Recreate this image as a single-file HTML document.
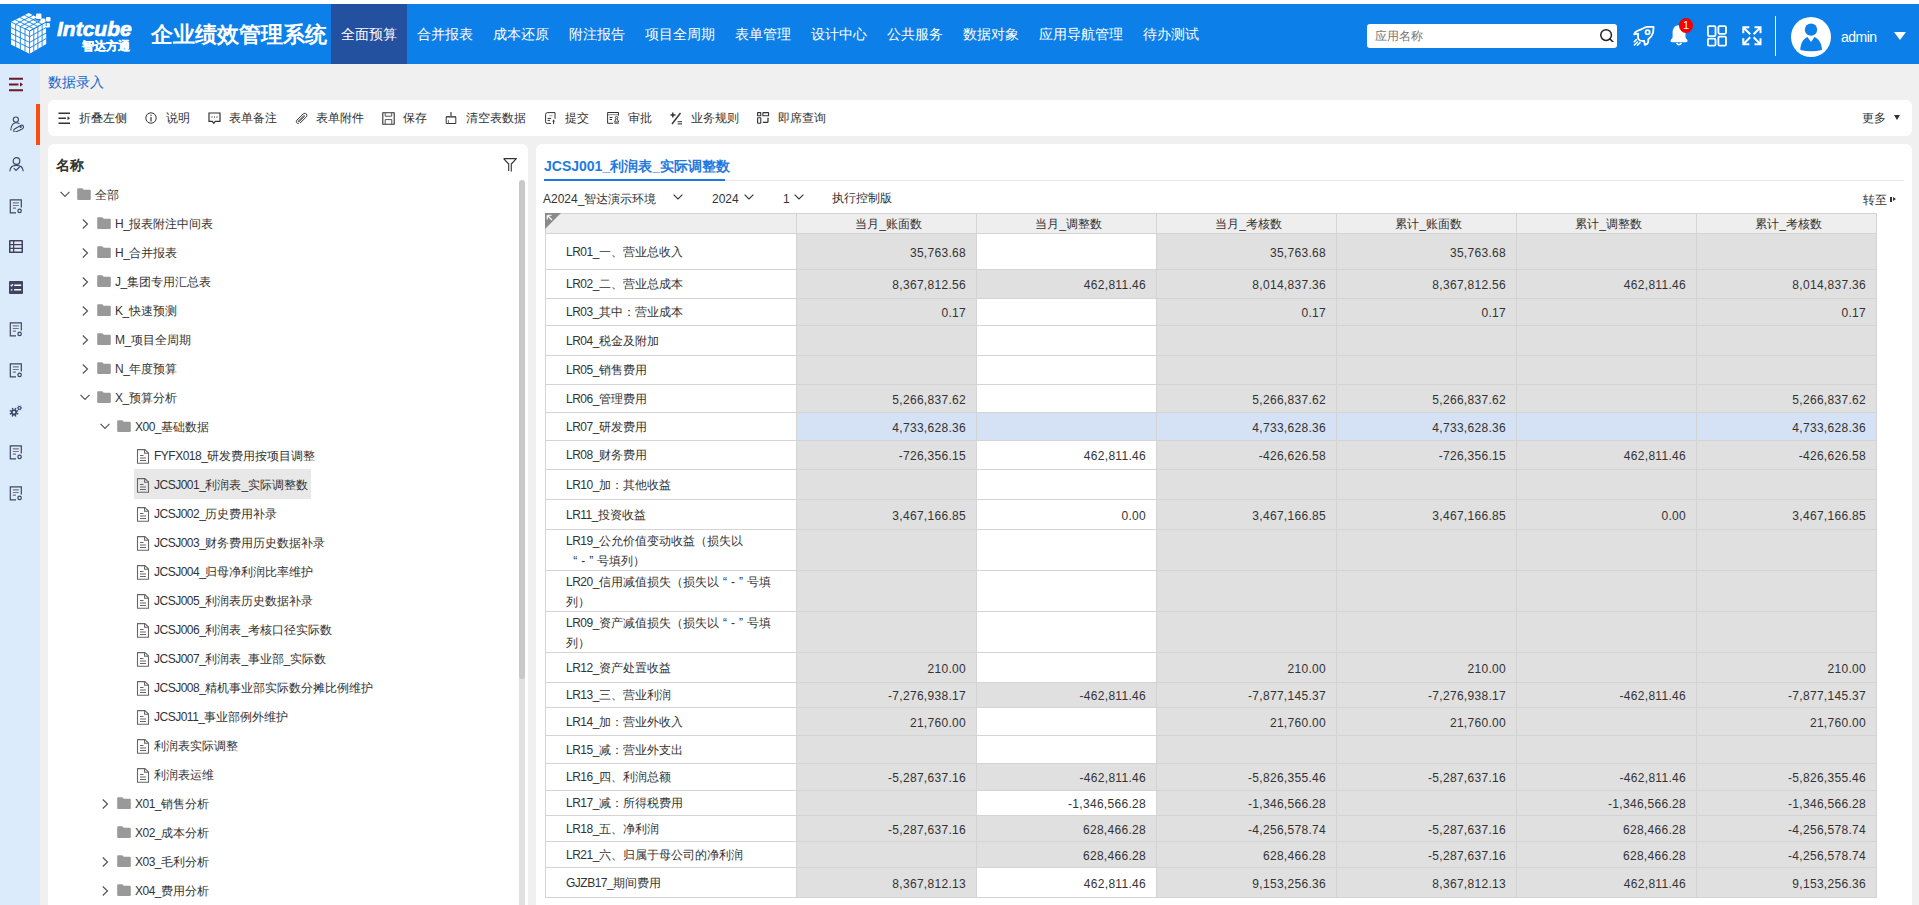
<!DOCTYPE html>
<html><head><meta charset="utf-8">
<style>
*{margin:0;padding:0;box-sizing:border-box}
html,body{width:1919px;height:905px;overflow:hidden;background:#f0f0f0;font-family:"Liberation Sans",sans-serif;color:#333}
.abs{position:absolute}
#top{position:absolute;left:0;top:0;width:1919px;height:4px;background:#fff}
#hdr{position:absolute;left:0;top:4px;width:1919px;height:60px;background:#0c7fe8;color:#fff}
.nav{position:absolute;top:0;height:60px;line-height:60px;font-size:14px;padding:0 10px;color:#fff;white-space:nowrap}
.nav.act{background:#23509f}
#side{position:absolute;left:0;top:64px;width:40px;height:841px;background:#dcebfb}
.sic{position:absolute;left:9px}
#crumb{position:absolute;left:48px;top:72px;font-size:14px;line-height:20px;color:#1466cc}
#tb{position:absolute;left:48px;top:100px;width:1864px;height:36px;background:#fff;border-radius:6px}
.tbi{position:absolute;top:9px;font-size:12px;line-height:18px;color:#333;white-space:nowrap}
.tbic{position:absolute;top:12px}
#lp{position:absolute;left:48px;top:144px;width:480px;height:780px;background:#fff;border-radius:6px}
#rp{position:absolute;left:536px;top:144px;width:1376px;height:780px;background:#fff;border-radius:6px}
.tt{position:absolute;font-size:12px;line-height:20px;color:#333;white-space:nowrap}
.ic{position:absolute;line-height:0}
.sel{position:absolute;background:#e8e8e8}
.th{position:absolute;background:#eeeeee;border-left:1px solid #d4d4d4;border-top:1px solid #d4d4d4;font-size:12px;line-height:19px;padding-top:1px;padding-left:4px;text-align:center;color:#333}
.td{position:absolute;border-left:1px solid #d4d4d4;border-top:1px solid #d4d4d4;font-size:12px;color:#333;white-space:nowrap;overflow:hidden}
.lab{padding-left:20px;background:#fff}
.lab2{padding-left:20px;background:#fff;padding-top:1px}
.num{text-align:right;padding-right:10px;letter-spacing:0.3px}
.g{background:#e0e0e0}
.w{background:#fff}
.b{background:#d5e1f5}
.lt{letter-spacing:-0.5px}
.q{display:inline-block;width:12px;text-align:center}
.corner{position:absolute;left:0;top:0;width:0;height:0;border-top:16px solid #777;border-right:16px solid transparent}
</style></head><body>
<div id="top"></div>
<div id="hdr">
  <svg class="abs" style="left:0;top:0" width="60" height="60" viewBox="0 4 60 60">
    <path d="M11 22 L28.8 13 L46.2 22 L46.2 44 L29.6 53.7 L11 44.6 Z" fill="#fff"/>
    <path d="M11.0 27.6 L29.6 36.7 M15.7 24.2 L15.7 46.9 M33.8 28.8 L33.8 51.3 M29.6 36.7 L46.2 27.5 M15.4 19.8 L33.8 28.8 M15.7 24.2 L33.1 15.2 M11.0 33.3 L29.6 42.4 M20.3 26.5 L20.3 49.2 M37.9 26.5 L37.9 48.9 M29.6 42.4 L46.2 33.0 M19.9 17.5 L37.9 26.5 M20.3 26.5 L37.5 17.5 M11.0 39.0 L29.6 48.0 M25.0 28.8 L25.0 51.4 M42.1 24.2 L42.1 46.4 M29.6 48.0 L46.2 38.5 M24.4 15.2 L42.1 24.2 M25.0 28.8 L41.9 19.8 M29.6 31 L29.6 53.7 M11 22 L29.6 31 L46.2 22" stroke="#0c7fe8" stroke-width="0.9" fill="none"/>
    <path d="M34 20 L46.5 13.5 L50 15.5 L50 30 L46.2 34.4 L46.2 22 Z" fill="#0c7fe8"/>
    <rect x="36" y="13.5" width="5.5" height="5.5" rx="1.2" fill="#fff"/>
    <rect x="40.5" y="18.5" width="5" height="5" rx="1.2" fill="#fff"/>
    <rect x="46" y="17" width="4.5" height="4.5" rx="1.2" fill="#fff"/>
    <rect x="45.5" y="23" width="4.5" height="4.5" rx="1.2" fill="#fff"/>
    <path d="M29.6 31 L46.2 22 L46.2 26" stroke="#0c7fe8" stroke-width="0.9" fill="none"/>
  </svg>
  <div class="abs" style="left:57px;top:13px;font-size:21px;line-height:24px;font-weight:bold;font-style:italic;-webkit-text-stroke:0.7px #fff">Intcube</div>
  <div class="abs" style="left:81.5px;top:35px;font-size:12px;line-height:14px;font-weight:bold;letter-spacing:0.3px;-webkit-text-stroke:0.3px #fff">智达方通</div>
  <div class="abs" style="left:151px;top:18px;font-size:22px;line-height:26px;font-weight:bold">企业绩效管理系统</div>
  <div class="nav act" style="left:331px">全面预算</div>
  <div class="nav" style="left:407px">合并报表</div>
  <div class="nav" style="left:483px">成本还原</div>
  <div class="nav" style="left:559px">附注报告</div>
  <div class="nav" style="left:635px">项目全周期</div>
  <div class="nav" style="left:725px">表单管理</div>
  <div class="nav" style="left:801px">设计中心</div>
  <div class="nav" style="left:877px">公共服务</div>
  <div class="nav" style="left:953px">数据对象</div>
  <div class="nav" style="left:1029px">应用导航管理</div>
  <div class="nav" style="left:1133px">待办测试</div>
  <div class="abs" style="left:1367px;top:20px;width:250px;height:24px;background:#fff;border-radius:3px"></div>
  <div class="abs" style="left:1375px;top:24px;font-size:12px;line-height:16px;color:#777">应用名称</div>
  
  <svg class="abs" style="left:1598px;top:20px" width="18" height="18" viewBox="0 0 18 18"><circle cx="8.1" cy="11.1" r="5.35" fill="none" stroke="#222" stroke-width="1.5"/><path d="M12 15 L15.2 18.2" stroke="#222" stroke-width="1.6" stroke-linecap="round"/></svg>
  <svg class="abs" style="left:1632px;top:20px" width="24" height="24" viewBox="0 0 24 24" fill="none" stroke="#fff" stroke-width="1.8" stroke-linejoin="round" stroke-linecap="round">
    <path d="M21.6 2.8 L15.3 2.8 C13 3 11.4 3.9 9.8 5.1 L5.4 6.9 C3.6 7.6 2.4 9 2.2 10.4 L6.2 9.6 L6 13.8 C6.3 15.3 7 16.2 8.2 16.6 L12.2 17 L12.8 20.8 C14.3 20.7 15.6 19.8 16.2 18.4 L16.3 15.3 C18.8 13.3 20.4 11.2 21.1 8.8 Z"/>
    <circle cx="15.6" cy="8.2" r="2.1"/>
    <path d="M2.4 21 L5.4 18 M5.4 21.2 L8 18.6 M2.2 17.8 L4.4 15.6" stroke-width="1.6"/>
  </svg>
  <svg class="abs" style="left:1668px;top:18px" width="22" height="25" viewBox="0 0 22 25"><path d="M11 3.2 C6.5 3.2 4.6 6.8 4.6 10.8 L4.6 15.6 L2.6 18.2 Q2.1 20.2 4.1 20.2 L18 20.2 Q20 20.2 19.5 18.2 L17.5 15.6 L17.5 10.8 C17.5 6.8 15.5 3.2 11 3.2 Z" fill="#fff"/><path d="M8.6 21 Q11 24.6 13.4 21" fill="none" stroke="#fff" stroke-width="1.5"/></svg>
  <div class="abs" style="left:1679px;top:14px;width:14px;height:15px;border-radius:50%;background:#f50000;color:#fff;font-family:'Liberation Sans',sans-serif;font-size:11px;line-height:15px;text-align:center">1</div>
  <svg class="abs" style="left:1706px;top:21px" width="22" height="22" viewBox="0 0 22 22" fill="none" stroke="#fff" stroke-width="1.8">
    <rect x="1.9" y="1.1" width="7.6" height="10.1" rx="1.2"/><rect x="12.4" y="1.1" width="7.6" height="7.7" rx="1.2"/>
    <rect x="1.9" y="13.7" width="7.6" height="7" rx="1.2"/><rect x="12.4" y="11.6" width="7.6" height="9.1" rx="1.2"/>
  </svg>
  <svg class="abs" style="left:1742px;top:22px" width="20" height="20" viewBox="0 0 20 20" fill="none" stroke="#fff" stroke-width="2">
    <path d="M1.3 7.3 V1.3 H7.3 M12.5 1.3 H18.5 V7.3 M1.3 12.2 V18.2 H7.3 M12.5 18.2 H18.5 V12.2" stroke-linejoin="miter"/>
    <path d="M2 2 L8.2 8.2 M17.8 2 L11.6 8.2 M2 17.5 L8.2 11.3 M17.8 17.5 L11.6 11.3"/>
  </svg>
  <svg class="abs" style="left:1791px;top:13px" width="40" height="40" viewBox="0 0 40 40"><circle cx="20" cy="20" r="20" fill="#fff"/><circle cx="20" cy="12.6" r="6.2" fill="#0c7fe8"/><path d="M9.3 33 C9.5 26 12.5 21.5 16.5 20 L20 25 L23.5 20 C27.5 21.5 30.8 26 31 33 Q20 35.5 9.3 33 Z" fill="#0c7fe8"/></svg>
  <div class="abs" style="left:1775px;top:12px;width:1px;height:40px;background:#fff"></div>
    <div class="abs" style="left:1841px;top:24px;font-size:14px;line-height:18px;color:#fff;letter-spacing:-0.5px">admin</div>
  <div class="abs" style="left:1894px;top:28px;width:0;height:0;border-left:6.5px solid transparent;border-right:6.5px solid transparent;border-top:8.4px solid #fff"></div>
</div>
<div id="side">
  <div class="abs" style="left:36px;top:40px;width:4px;height:41px;background:#fc4c0c"></div>
  <svg class="abs" style="left:8px;top:13px" width="16" height="15" viewBox="0 0 16 15"><path d="M1 1.7 H15 M1 7.5 H10.5 M1 13.3 H15" stroke="#6a1b2b" stroke-width="1.9"/><path d="M12 5.2 L15 7.5 L12 9.8 Z" fill="#6a1b2b"/></svg>
  <svg class="abs" style="left:9px;top:52px" width="15" height="16" viewBox="0 0 15 16" fill="none" stroke="#3d4466" stroke-width="1.1"><circle cx="6.9" cy="3.6" r="2.6"/><path d="M1.8 14.6 C1.8 10 4 6.8 6.9 6.8 C8.4 6.8 9.6 7.2 10.6 7.9"/><path d="M5.2 13.2 L11.6 9.6 Q13.4 8.6 14.2 10 L14.4 10.6 Q14.9 12 13.2 12.9 L6.8 16 Q5 16.4 4.8 14.8 Q4.7 13.6 5.2 13.2 Z" stroke-width="1.1"/><rect x="10.8" y="10.1" width="1.8" height="1.8" fill="#3d4466" stroke="none"/></svg>
  <svg class="abs" style="left:9px;top:93px" width="15" height="15" viewBox="0 0 15 15" fill="none" stroke="#3d4466" stroke-width="1.2"><circle cx="7.5" cy="4" r="3.3"/><path d="M0.8 14.2 C1 10.5 3.8 8.3 7.5 8.3 C11.2 8.3 14 10.5 14.2 14.2"/><path d="M4.8 11.2 L7 13.4 L10.8 9.8"/></svg>
  <div class="abs" style="left:9px;top:135px;line-height:0"><svg width="14" height="15" viewBox="0 0 14 15" fill="none" stroke="#3d4466" stroke-width="1.2"><path d="M7 13.9 H1.3 V0.9 H12.3 V8.5"/><path d="M3.8 3.8 H9.8 M3.8 6.5 H9.8 M3.8 9.2 H7" stroke="#777"/><circle cx="10.6" cy="11.9" r="1.7"/></svg></div>
  <div class="abs" style="left:9px;top:258px;line-height:0"><svg width="14" height="15" viewBox="0 0 14 15" fill="none" stroke="#3d4466" stroke-width="1.2"><path d="M7 13.9 H1.3 V0.9 H12.3 V8.5"/><path d="M3.8 3.8 H9.8 M3.8 6.5 H9.8 M3.8 9.2 H7" stroke="#777"/><circle cx="10.6" cy="11.9" r="1.7"/></svg></div>
  <div class="abs" style="left:9px;top:299px;line-height:0"><svg width="14" height="15" viewBox="0 0 14 15" fill="none" stroke="#3d4466" stroke-width="1.2"><path d="M7 13.9 H1.3 V0.9 H12.3 V8.5"/><path d="M3.8 3.8 H9.8 M3.8 6.5 H9.8 M3.8 9.2 H7" stroke="#777"/><circle cx="10.6" cy="11.9" r="1.7"/></svg></div>
  <div class="abs" style="left:9px;top:381px;line-height:0"><svg width="14" height="15" viewBox="0 0 14 15" fill="none" stroke="#3d4466" stroke-width="1.2"><path d="M7 13.9 H1.3 V0.9 H12.3 V8.5"/><path d="M3.8 3.8 H9.8 M3.8 6.5 H9.8 M3.8 9.2 H7" stroke="#777"/><circle cx="10.6" cy="11.9" r="1.7"/></svg></div>
  <div class="abs" style="left:9px;top:422px;line-height:0"><svg width="14" height="15" viewBox="0 0 14 15" fill="none" stroke="#3d4466" stroke-width="1.2"><path d="M7 13.9 H1.3 V0.9 H12.3 V8.5"/><path d="M3.8 3.8 H9.8 M3.8 6.5 H9.8 M3.8 9.2 H7" stroke="#777"/><circle cx="10.6" cy="11.9" r="1.7"/></svg></div>
  <svg class="abs" style="left:9px;top:176px" width="14" height="13" viewBox="0 0 14 13"><rect x="0" y="0" width="14" height="13" rx="0.8" fill="#3d4466"/><path d="M1.5 1.5 H4 V4 H1.5 Z M5.3 1.5 H12.5 V4 H5.3 Z M1.5 5.3 H4 V7.7 H1.5 Z M5.3 5.3 H12.5 V7.7 H5.3 Z M1.5 9 H4 V11.5 H1.5 Z M5.3 9 H12.5 V11.5 H5.3 Z" fill="#e8eaf2"/></svg>
  <svg class="abs" style="left:9px;top:217px" width="14" height="13" viewBox="0 0 14 13"><rect x="0" y="0" width="14" height="13" rx="1" fill="#3d4466"/><path d="M5.2 4.2 H12.2 M5.2 8.8 H12.2" stroke="#fff" stroke-width="1.5"/><path d="M1.6 3.8 L2.6 4.8 L4 3.2 M1.8 8.8 H3.4" stroke="#fff" stroke-width="1.2" fill="none"/></svg>
  <svg class="abs" style="left:9px;top:340px" width="15" height="14" viewBox="0 0 15 14" fill="none" stroke="#3d4466"><circle cx="5" cy="8.3" r="2.2" stroke-width="1.8"/><path d="M7.77 9.45 L9.25 10.06 M6.15 11.07 L6.76 12.55 M3.85 11.07 L3.24 12.55 M2.23 9.45 L0.75 10.06 M2.23 7.15 L0.75 6.54 M3.85 5.53 L3.24 4.05 M6.15 5.53 L6.76 4.05 M7.77 7.15 L9.25 6.54" stroke-width="1.4"/><circle cx="10.5" cy="3.9" r="1.4" stroke-width="1.1"/><path d="M12.10 3.90 L13.10 3.90 M11.30 5.29 L11.80 6.15 M9.70 5.29 L9.20 6.15 M8.90 3.90 L7.90 3.90 M9.70 2.51 L9.20 1.65 M11.30 2.51 L11.80 1.65" stroke-width="1"/></svg>
</div>
<div id="crumb">数据录入</div>
<div id="tb">
  <svg class="abs" style="left:10px;top:12px" width="13" height="13" viewBox="0 0 13 13" fill="none" stroke="#333" stroke-width="1.2"><path d="M0.5 1.2 H12 M0.5 6.2 H8 M0.5 11.3 H12" stroke-width="1.6"/><path d="M9.5 4.2 L12 6.2 L9.5 8.2 Z" fill="#333" stroke="none"/></svg>
  <div class="tbi" style="left:31px">折叠左侧</div>
  <svg class="abs" style="left:97px;top:12px" width="13" height="13" viewBox="0 0 13 13" fill="none" stroke="#333" stroke-width="1.2"><circle cx="6" cy="6" r="5.2" stroke-width="1"/><path d="M6 5 V9.4" stroke-width="1.2"/><circle cx="6" cy="3.3" r="0.7" fill="#333" stroke="none"/></svg>
  <div class="tbi" style="left:118px">说明</div>
  <svg class="abs" style="left:160px;top:12px" width="13" height="13" viewBox="0 0 13 13" fill="none" stroke="#333" stroke-width="1.2"><path d="M1 1 H12 V9.3 H7.3 L5.8 11.2 L4.3 9.3 H1 Z"/><path d="M3.6 5 H4.4 M6.1 5 H6.9 M8.6 5 H9.4" stroke-width="1.3"/></svg>
  <div class="tbi" style="left:181px">表单备注</div>
  <svg class="abs" style="left:247px;top:12px" width="13" height="13" viewBox="0 0 13 13" fill="none" stroke="#333" stroke-width="1.2"><path d="M3.6 11.6 C1.6 11.6 0.6 9.6 1.9 8.2 L8.2 1.9 C9.2 0.9 11.8 1.1 11.9 3.3 C12 4 11.6 4.6 11.2 5 L5 11.1 M9.2 3.3 L3.4 9.1 C3 9.6 3.5 10.1 4 9.7 L9.9 3.9" stroke-width="1"/></svg>
  <div class="tbi" style="left:268px">表单附件</div>
  <svg class="abs" style="left:334px;top:12px" width="13" height="13" viewBox="0 0 13 13" fill="none" stroke="#333" stroke-width="1.2"><path d="M0.8 0.8 H12.2 V12.2 H0.8 Z" stroke-width="1.1"/><path d="M3.2 1 V4.2 H9.7 V1 M3.2 12 V7.6 H9.8 V12" stroke="#555" stroke-width="1"/></svg>
  <div class="tbi" style="left:355px">保存</div>
  <svg class="abs" style="left:397px;top:12px" width="13" height="13" viewBox="0 0 13 13" fill="none" stroke="#333" stroke-width="1.2"><path d="M6 0 V4.2" stroke-width="1.1"/><path d="M1 4.8 H11" stroke-width="1.6" stroke="#555"/><path d="M1.2 5 V11.5 H10.8 V5" stroke-width="1"/><path d="M3.4 8 V11.4" stroke="#666" stroke-width="0.9"/></svg>
  <div class="tbi" style="left:418px">清空表数据</div>
  <svg class="abs" style="left:497px;top:12px" width="13" height="13" viewBox="0 0 13 13" fill="none" stroke="#333" stroke-width="1.2"><path d="M6 11.4 H2.2 Q0.6 11.4 0.6 9.8 V2.6 Q0.6 0.6 2.6 0.6 H10 V6.8" stroke-width="1"/><path d="M4.4 3.7 H7.6" stroke="#999" stroke-width="1"/><path d="M2.6 6.4 H6.2 M2.6 8.4 H5" stroke-width="1"/><path d="M8.6 8.4 V12.2" stroke-width="1"/><path d="M7.2 9.4 L8.6 7.6 L10 9.4 Z" fill="#333" stroke="none"/></svg>
  <div class="tbi" style="left:517px">提交</div>
  <svg class="abs" style="left:559px;top:12px" width="13" height="13" viewBox="0 0 13 13" fill="none" stroke="#333" stroke-width="1.2"><path d="M11.5 3.7 V0.5 H0.6 V11.3 H6" stroke-width="1"/><path d="M0.8 2.7 H11.2" stroke="#888" stroke-width="1"/><path d="M2.6 5.5 H5.4 M2.6 7.5 H5" stroke-width="1"/><circle cx="9.6" cy="5.6" r="1.2" stroke-width="0.9"/><path d="M8.8 7 L7.6 10 H11.6 L10.4 7 M7.4 11.2 H11.8" stroke-width="0.9"/></svg>
  <div class="tbi" style="left:580px">审批</div>
  <svg class="abs" style="left:622px;top:12px" width="13" height="13" viewBox="0 0 13 13" fill="none" stroke="#333" stroke-width="1.2"><path d="M2.8 0.5 V5.5 M0.5 3 H5.5 M10.5 1 L2 12" stroke-width="1.4"/><path d="M7.6 9.6 H12 M7.6 11.8 H12" stroke-width="1.3" stroke="#555"/></svg>
  <div class="tbi" style="left:643px">业务规则</div>
  <svg class="abs" style="left:709px;top:12px" width="13" height="13" viewBox="0 0 13 13" fill="none" stroke="#333" stroke-width="1.2"><rect x="0.6" y="0.6" width="3.2" height="3.2" rx="0.4" stroke-width="1.1"/><rect x="5.9" y="0.6" width="5.7" height="3.2" rx="0.4" stroke-width="1.1"/><rect x="0.6" y="5.8" width="3.2" height="5.4" rx="0.4" stroke-width="1.1"/><path d="M11 5.8 V9.6 Q11 10.3 10.3 10.3 H5.8" stroke-width="1.3"/></svg>
  <div class="tbi" style="left:730px">即席查询</div>
  <div class="tbi" style="left:1814px">更多</div>
  <div class="abs" style="left:1846px;top:15px;width:0;height:0;border-left:3.5px solid transparent;border-right:3.5px solid transparent;border-top:5px solid #333"></div>
</div>
<div id="lp">
  <div class="abs" style="left:8px;top:11px;font-size:14px;line-height:20px;font-weight:600;color:#333">名称</div>
  <div class="abs" style="left:471px;top:530px;width:6px;height:300px;background:#e1e1e1"></div>
  <div class="abs" style="left:471px;top:36px;width:6px;height:499px;background:#c8c8c8;border-radius:3px"></div>
  <svg class="abs" style="left:455px;top:14px" width="14" height="14" viewBox="0 0 14 14" fill="none" stroke="#333" stroke-width="1.1" stroke-linejoin="round"><path d="M0.6 0.6 H13.4 L8.3 6 V13.6 M5.7 13 V6 L0.6 0.6"/></svg>
</div>
<div id="rp">
  <div class="abs" style="left:8px;top:12px;font-size:14px;line-height:20px;font-weight:bold;color:#1f7ae0">JCSJ001_利润表_实际调整数</div>
  <div class="abs" style="left:8px;top:36px;width:1360px;height:1px;background:#e8e8e8"></div>
  <div class="abs" style="left:8px;top:35px;width:181px;height:2px;background:#1f7ae0"></div>
  <div class="abs" style="left:7px;top:46px;font-size:12px;line-height:18px;color:#333">A2024_智达演示环境</div>
  <div class="abs" style="left:176px;top:46px;font-size:12px;line-height:18px;color:#333">2024</div>
  <div class="abs" style="left:247px;top:46px;font-size:12px;line-height:18px;color:#333">1</div>
  <div class="abs" style="left:296px;top:45px;font-size:12px;line-height:18px;color:#333">执行控制版</div>
  <div class="abs" style="left:1327px;top:47px;font-size:12px;line-height:18px;color:#333">转至</div>
  <div class="abs" style="left:1354px;top:53px;width:2px;height:5px;background:#333"></div>
  <div class="abs" style="left:1357px;top:53px;width:0;height:0;border-top:2.5px solid transparent;border-bottom:2.5px solid transparent;border-left:3px solid #333"></div>
  <svg class="abs" style="left:137px;top:50px" width="10" height="6" viewBox="0 0 10 6"><path d="M0.6 0.6 L5 5 L9.4 0.6" fill="none" stroke="#333" stroke-width="1.1"/></svg>
  <svg class="abs" style="left:208px;top:50px" width="10" height="6" viewBox="0 0 10 6"><path d="M0.6 0.6 L5 5 L9.4 0.6" fill="none" stroke="#333" stroke-width="1.1"/></svg>
  <svg class="abs" style="left:258px;top:50px" width="10" height="6" viewBox="0 0 10 6"><path d="M0.6 0.6 L5 5 L9.4 0.6" fill="none" stroke="#333" stroke-width="1.1"/></svg>
</div>
<div class="ic" style="left:60px;top:191px"><svg width="10" height="7" viewBox="0 0 10 7"><path d="M0.5 0.8 L5 5.5 L9.5 0.8" fill="none" stroke="#555" stroke-width="1.2"/></svg></div>
<div class="ic" style="left:77px;top:188px"><svg width="14" height="13" viewBox="0 0 14 13"><path d="M0.2 1.2 Q0.2 0.2 1.2 0.2 L5 0.2 Q6.2 0.2 6.6 1.8 L12.8 1.8 Q13.8 1.8 13.8 2.8 L13.8 11.2 Q13.8 12 12.8 12 L1.2 12 Q0.2 12 0.2 11.2 Z" fill="#999"/></svg></div>
<div class="tt" style="left:95px;top:185px">全部</div>
<div class="ic" style="left:82px;top:219px"><svg width="7" height="10" viewBox="0 0 7 10"><path d="M0.8 0.5 L5.5 5 L0.8 9.5" fill="none" stroke="#555" stroke-width="1.2"/></svg></div>
<div class="ic" style="left:97px;top:217px"><svg width="14" height="13" viewBox="0 0 14 13"><path d="M0.2 1.2 Q0.2 0.2 1.2 0.2 L5 0.2 Q6.2 0.2 6.6 1.8 L12.8 1.8 Q13.8 1.8 13.8 2.8 L13.8 11.2 Q13.8 12 12.8 12 L1.2 12 Q0.2 12 0.2 11.2 Z" fill="#999"/></svg></div>
<div class="tt" style="left:115px;top:214px"><span class=lt>H_</span>报表附注中间表</div>
<div class="ic" style="left:82px;top:248px"><svg width="7" height="10" viewBox="0 0 7 10"><path d="M0.8 0.5 L5.5 5 L0.8 9.5" fill="none" stroke="#555" stroke-width="1.2"/></svg></div>
<div class="ic" style="left:97px;top:246px"><svg width="14" height="13" viewBox="0 0 14 13"><path d="M0.2 1.2 Q0.2 0.2 1.2 0.2 L5 0.2 Q6.2 0.2 6.6 1.8 L12.8 1.8 Q13.8 1.8 13.8 2.8 L13.8 11.2 Q13.8 12 12.8 12 L1.2 12 Q0.2 12 0.2 11.2 Z" fill="#999"/></svg></div>
<div class="tt" style="left:115px;top:243px"><span class=lt>H_</span>合并报表</div>
<div class="ic" style="left:82px;top:277px"><svg width="7" height="10" viewBox="0 0 7 10"><path d="M0.8 0.5 L5.5 5 L0.8 9.5" fill="none" stroke="#555" stroke-width="1.2"/></svg></div>
<div class="ic" style="left:97px;top:275px"><svg width="14" height="13" viewBox="0 0 14 13"><path d="M0.2 1.2 Q0.2 0.2 1.2 0.2 L5 0.2 Q6.2 0.2 6.6 1.8 L12.8 1.8 Q13.8 1.8 13.8 2.8 L13.8 11.2 Q13.8 12 12.8 12 L1.2 12 Q0.2 12 0.2 11.2 Z" fill="#999"/></svg></div>
<div class="tt" style="left:115px;top:272px"><span class=lt>J_</span>集团专用汇总表</div>
<div class="ic" style="left:82px;top:306px"><svg width="7" height="10" viewBox="0 0 7 10"><path d="M0.8 0.5 L5.5 5 L0.8 9.5" fill="none" stroke="#555" stroke-width="1.2"/></svg></div>
<div class="ic" style="left:97px;top:304px"><svg width="14" height="13" viewBox="0 0 14 13"><path d="M0.2 1.2 Q0.2 0.2 1.2 0.2 L5 0.2 Q6.2 0.2 6.6 1.8 L12.8 1.8 Q13.8 1.8 13.8 2.8 L13.8 11.2 Q13.8 12 12.8 12 L1.2 12 Q0.2 12 0.2 11.2 Z" fill="#999"/></svg></div>
<div class="tt" style="left:115px;top:301px"><span class=lt>K_</span>快速预测</div>
<div class="ic" style="left:82px;top:335px"><svg width="7" height="10" viewBox="0 0 7 10"><path d="M0.8 0.5 L5.5 5 L0.8 9.5" fill="none" stroke="#555" stroke-width="1.2"/></svg></div>
<div class="ic" style="left:97px;top:333px"><svg width="14" height="13" viewBox="0 0 14 13"><path d="M0.2 1.2 Q0.2 0.2 1.2 0.2 L5 0.2 Q6.2 0.2 6.6 1.8 L12.8 1.8 Q13.8 1.8 13.8 2.8 L13.8 11.2 Q13.8 12 12.8 12 L1.2 12 Q0.2 12 0.2 11.2 Z" fill="#999"/></svg></div>
<div class="tt" style="left:115px;top:330px"><span class=lt>M_</span>项目全周期</div>
<div class="ic" style="left:82px;top:364px"><svg width="7" height="10" viewBox="0 0 7 10"><path d="M0.8 0.5 L5.5 5 L0.8 9.5" fill="none" stroke="#555" stroke-width="1.2"/></svg></div>
<div class="ic" style="left:97px;top:362px"><svg width="14" height="13" viewBox="0 0 14 13"><path d="M0.2 1.2 Q0.2 0.2 1.2 0.2 L5 0.2 Q6.2 0.2 6.6 1.8 L12.8 1.8 Q13.8 1.8 13.8 2.8 L13.8 11.2 Q13.8 12 12.8 12 L1.2 12 Q0.2 12 0.2 11.2 Z" fill="#999"/></svg></div>
<div class="tt" style="left:115px;top:359px"><span class=lt>N_</span>年度预算</div>
<div class="ic" style="left:80px;top:394px"><svg width="10" height="7" viewBox="0 0 10 7"><path d="M0.5 0.8 L5 5.5 L9.5 0.8" fill="none" stroke="#555" stroke-width="1.2"/></svg></div>
<div class="ic" style="left:97px;top:391px"><svg width="14" height="13" viewBox="0 0 14 13"><path d="M0.2 1.2 Q0.2 0.2 1.2 0.2 L5 0.2 Q6.2 0.2 6.6 1.8 L12.8 1.8 Q13.8 1.8 13.8 2.8 L13.8 11.2 Q13.8 12 12.8 12 L1.2 12 Q0.2 12 0.2 11.2 Z" fill="#999"/></svg></div>
<div class="tt" style="left:115px;top:388px"><span class=lt>X_</span>预算分析</div>
<div class="ic" style="left:100px;top:423px"><svg width="10" height="7" viewBox="0 0 10 7"><path d="M0.5 0.8 L5 5.5 L9.5 0.8" fill="none" stroke="#555" stroke-width="1.2"/></svg></div>
<div class="ic" style="left:117px;top:420px"><svg width="14" height="13" viewBox="0 0 14 13"><path d="M0.2 1.2 Q0.2 0.2 1.2 0.2 L5 0.2 Q6.2 0.2 6.6 1.8 L12.8 1.8 Q13.8 1.8 13.8 2.8 L13.8 11.2 Q13.8 12 12.8 12 L1.2 12 Q0.2 12 0.2 11.2 Z" fill="#999"/></svg></div>
<div class="tt" style="left:135px;top:417px"><span class=lt>X00_</span>基础数据</div>
<div class="ic" style="left:136px;top:449px"><svg width="14" height="15" viewBox="0 0 14 15"><path d="M1.5 0.6 L9 0.6 L12.5 4 L12.5 14.2 L1.5 14.2 Z" fill="none" stroke="#666" stroke-width="1.1" stroke-linejoin="round"/><path d="M8.6 0.8 L8.6 4.3 L12.3 4.3" fill="none" stroke="#666" stroke-width="1.1"/><path d="M4 6.5 H7.5 M4 9 H10 M4 11.5 H10" stroke="#666" stroke-width="1.1"/></svg></div>
<div class="tt" style="left:154px;top:446px"><span class=lt>FYFX018_</span>研发费用按项目调整</div>
<div class="sel" style="left:134px;top:469px;width:177px;height:30px"></div>
<div class="ic" style="left:136px;top:478px"><svg width="14" height="15" viewBox="0 0 14 15"><path d="M1.5 0.6 L9 0.6 L12.5 4 L12.5 14.2 L1.5 14.2 Z" fill="none" stroke="#666" stroke-width="1.1" stroke-linejoin="round"/><path d="M8.6 0.8 L8.6 4.3 L12.3 4.3" fill="none" stroke="#666" stroke-width="1.1"/><path d="M4 6.5 H7.5 M4 9 H10 M4 11.5 H10" stroke="#666" stroke-width="1.1"/></svg></div>
<div class="tt" style="left:154px;top:475px"><span class=lt>JCSJ001_</span>利润表<span class=lt>_</span>实际调整数</div>
<div class="ic" style="left:136px;top:507px"><svg width="14" height="15" viewBox="0 0 14 15"><path d="M1.5 0.6 L9 0.6 L12.5 4 L12.5 14.2 L1.5 14.2 Z" fill="none" stroke="#666" stroke-width="1.1" stroke-linejoin="round"/><path d="M8.6 0.8 L8.6 4.3 L12.3 4.3" fill="none" stroke="#666" stroke-width="1.1"/><path d="M4 6.5 H7.5 M4 9 H10 M4 11.5 H10" stroke="#666" stroke-width="1.1"/></svg></div>
<div class="tt" style="left:154px;top:504px"><span class=lt>JCSJ002_</span>历史费用补录</div>
<div class="ic" style="left:136px;top:536px"><svg width="14" height="15" viewBox="0 0 14 15"><path d="M1.5 0.6 L9 0.6 L12.5 4 L12.5 14.2 L1.5 14.2 Z" fill="none" stroke="#666" stroke-width="1.1" stroke-linejoin="round"/><path d="M8.6 0.8 L8.6 4.3 L12.3 4.3" fill="none" stroke="#666" stroke-width="1.1"/><path d="M4 6.5 H7.5 M4 9 H10 M4 11.5 H10" stroke="#666" stroke-width="1.1"/></svg></div>
<div class="tt" style="left:154px;top:533px"><span class=lt>JCSJ003_</span>财务费用历史数据补录</div>
<div class="ic" style="left:136px;top:565px"><svg width="14" height="15" viewBox="0 0 14 15"><path d="M1.5 0.6 L9 0.6 L12.5 4 L12.5 14.2 L1.5 14.2 Z" fill="none" stroke="#666" stroke-width="1.1" stroke-linejoin="round"/><path d="M8.6 0.8 L8.6 4.3 L12.3 4.3" fill="none" stroke="#666" stroke-width="1.1"/><path d="M4 6.5 H7.5 M4 9 H10 M4 11.5 H10" stroke="#666" stroke-width="1.1"/></svg></div>
<div class="tt" style="left:154px;top:562px"><span class=lt>JCSJ004_</span>归母净利润比率维护</div>
<div class="ic" style="left:136px;top:594px"><svg width="14" height="15" viewBox="0 0 14 15"><path d="M1.5 0.6 L9 0.6 L12.5 4 L12.5 14.2 L1.5 14.2 Z" fill="none" stroke="#666" stroke-width="1.1" stroke-linejoin="round"/><path d="M8.6 0.8 L8.6 4.3 L12.3 4.3" fill="none" stroke="#666" stroke-width="1.1"/><path d="M4 6.5 H7.5 M4 9 H10 M4 11.5 H10" stroke="#666" stroke-width="1.1"/></svg></div>
<div class="tt" style="left:154px;top:591px"><span class=lt>JCSJ005_</span>利润表历史数据补录</div>
<div class="ic" style="left:136px;top:623px"><svg width="14" height="15" viewBox="0 0 14 15"><path d="M1.5 0.6 L9 0.6 L12.5 4 L12.5 14.2 L1.5 14.2 Z" fill="none" stroke="#666" stroke-width="1.1" stroke-linejoin="round"/><path d="M8.6 0.8 L8.6 4.3 L12.3 4.3" fill="none" stroke="#666" stroke-width="1.1"/><path d="M4 6.5 H7.5 M4 9 H10 M4 11.5 H10" stroke="#666" stroke-width="1.1"/></svg></div>
<div class="tt" style="left:154px;top:620px"><span class=lt>JCSJ006_</span>利润表<span class=lt>_</span>考核口径实际数</div>
<div class="ic" style="left:136px;top:652px"><svg width="14" height="15" viewBox="0 0 14 15"><path d="M1.5 0.6 L9 0.6 L12.5 4 L12.5 14.2 L1.5 14.2 Z" fill="none" stroke="#666" stroke-width="1.1" stroke-linejoin="round"/><path d="M8.6 0.8 L8.6 4.3 L12.3 4.3" fill="none" stroke="#666" stroke-width="1.1"/><path d="M4 6.5 H7.5 M4 9 H10 M4 11.5 H10" stroke="#666" stroke-width="1.1"/></svg></div>
<div class="tt" style="left:154px;top:649px"><span class=lt>JCSJ007_</span>利润表<span class=lt>_</span>事业部<span class=lt>_</span>实际数</div>
<div class="ic" style="left:136px;top:681px"><svg width="14" height="15" viewBox="0 0 14 15"><path d="M1.5 0.6 L9 0.6 L12.5 4 L12.5 14.2 L1.5 14.2 Z" fill="none" stroke="#666" stroke-width="1.1" stroke-linejoin="round"/><path d="M8.6 0.8 L8.6 4.3 L12.3 4.3" fill="none" stroke="#666" stroke-width="1.1"/><path d="M4 6.5 H7.5 M4 9 H10 M4 11.5 H10" stroke="#666" stroke-width="1.1"/></svg></div>
<div class="tt" style="left:154px;top:678px"><span class=lt>JCSJ008_</span>精机事业部实际数分摊比例维护</div>
<div class="ic" style="left:136px;top:710px"><svg width="14" height="15" viewBox="0 0 14 15"><path d="M1.5 0.6 L9 0.6 L12.5 4 L12.5 14.2 L1.5 14.2 Z" fill="none" stroke="#666" stroke-width="1.1" stroke-linejoin="round"/><path d="M8.6 0.8 L8.6 4.3 L12.3 4.3" fill="none" stroke="#666" stroke-width="1.1"/><path d="M4 6.5 H7.5 M4 9 H10 M4 11.5 H10" stroke="#666" stroke-width="1.1"/></svg></div>
<div class="tt" style="left:154px;top:707px"><span class=lt>JCSJ011_</span>事业部例外维护</div>
<div class="ic" style="left:136px;top:739px"><svg width="14" height="15" viewBox="0 0 14 15"><path d="M1.5 0.6 L9 0.6 L12.5 4 L12.5 14.2 L1.5 14.2 Z" fill="none" stroke="#666" stroke-width="1.1" stroke-linejoin="round"/><path d="M8.6 0.8 L8.6 4.3 L12.3 4.3" fill="none" stroke="#666" stroke-width="1.1"/><path d="M4 6.5 H7.5 M4 9 H10 M4 11.5 H10" stroke="#666" stroke-width="1.1"/></svg></div>
<div class="tt" style="left:154px;top:736px">利润表实际调整</div>
<div class="ic" style="left:136px;top:768px"><svg width="14" height="15" viewBox="0 0 14 15"><path d="M1.5 0.6 L9 0.6 L12.5 4 L12.5 14.2 L1.5 14.2 Z" fill="none" stroke="#666" stroke-width="1.1" stroke-linejoin="round"/><path d="M8.6 0.8 L8.6 4.3 L12.3 4.3" fill="none" stroke="#666" stroke-width="1.1"/><path d="M4 6.5 H7.5 M4 9 H10 M4 11.5 H10" stroke="#666" stroke-width="1.1"/></svg></div>
<div class="tt" style="left:154px;top:765px">利润表运维</div>
<div class="ic" style="left:102px;top:799px"><svg width="7" height="10" viewBox="0 0 7 10"><path d="M0.8 0.5 L5.5 5 L0.8 9.5" fill="none" stroke="#555" stroke-width="1.2"/></svg></div>
<div class="ic" style="left:117px;top:797px"><svg width="14" height="13" viewBox="0 0 14 13"><path d="M0.2 1.2 Q0.2 0.2 1.2 0.2 L5 0.2 Q6.2 0.2 6.6 1.8 L12.8 1.8 Q13.8 1.8 13.8 2.8 L13.8 11.2 Q13.8 12 12.8 12 L1.2 12 Q0.2 12 0.2 11.2 Z" fill="#999"/></svg></div>
<div class="tt" style="left:135px;top:794px"><span class=lt>X01_</span>销售分析</div>
<div class="ic" style="left:117px;top:826px"><svg width="14" height="13" viewBox="0 0 14 13"><path d="M0.2 1.2 Q0.2 0.2 1.2 0.2 L5 0.2 Q6.2 0.2 6.6 1.8 L12.8 1.8 Q13.8 1.8 13.8 2.8 L13.8 11.2 Q13.8 12 12.8 12 L1.2 12 Q0.2 12 0.2 11.2 Z" fill="#999"/></svg></div>
<div class="tt" style="left:135px;top:823px"><span class=lt>X02_</span>成本分析</div>
<div class="ic" style="left:102px;top:857px"><svg width="7" height="10" viewBox="0 0 7 10"><path d="M0.8 0.5 L5.5 5 L0.8 9.5" fill="none" stroke="#555" stroke-width="1.2"/></svg></div>
<div class="ic" style="left:117px;top:855px"><svg width="14" height="13" viewBox="0 0 14 13"><path d="M0.2 1.2 Q0.2 0.2 1.2 0.2 L5 0.2 Q6.2 0.2 6.6 1.8 L12.8 1.8 Q13.8 1.8 13.8 2.8 L13.8 11.2 Q13.8 12 12.8 12 L1.2 12 Q0.2 12 0.2 11.2 Z" fill="#999"/></svg></div>
<div class="tt" style="left:135px;top:852px"><span class=lt>X03_</span>毛利分析</div>
<div class="ic" style="left:102px;top:886px"><svg width="7" height="10" viewBox="0 0 7 10"><path d="M0.8 0.5 L5.5 5 L0.8 9.5" fill="none" stroke="#555" stroke-width="1.2"/></svg></div>
<div class="ic" style="left:117px;top:884px"><svg width="14" height="13" viewBox="0 0 14 13"><path d="M0.2 1.2 Q0.2 0.2 1.2 0.2 L5 0.2 Q6.2 0.2 6.6 1.8 L12.8 1.8 Q13.8 1.8 13.8 2.8 L13.8 11.2 Q13.8 12 12.8 12 L1.2 12 Q0.2 12 0.2 11.2 Z" fill="#999"/></svg></div>
<div class="tt" style="left:135px;top:881px"><span class=lt>X04_</span>费用分析</div>
<div class="th" style="left:545px;top:213px;width:251px;height:20px"><svg class="abs" style="left:-1px;top:-1px" width="16" height="16" viewBox="0 0 16 16"><path d="M0 0 H16 L0 16 Z" fill="#8a8a8a"/><path d="M2.5 2.5 L7 7 M2.5 2.2 H6.6 M2.2 2.5 V6.6" stroke="#fff" stroke-width="1.1" fill="none"/></svg></div>
<div class="th" style="left:796px;top:213px;width:180px;height:20px">当月_账面数</div>
<div class="th" style="left:976px;top:213px;width:180px;height:20px">当月_调整数</div>
<div class="th" style="left:1156px;top:213px;width:180px;height:20px">当月_考核数</div>
<div class="th" style="left:1336px;top:213px;width:180px;height:20px">累计_账面数</div>
<div class="th" style="left:1516px;top:213px;width:180px;height:20px">累计_调整数</div>
<div class="th" style="left:1696px;top:213px;width:180px;height:20px">累计_考核数</div>
<div class="td lab" style="left:545px;top:233px;width:251px;height:36px;line-height:36px"><span class=lt>LR01_</span>一、营业总收入</div>
<div class="td num g" style="left:796px;top:233px;width:180px;height:36px;padding-top:2px;line-height:34px">35,763.68</div>
<div class="td num w" style="left:976px;top:233px;width:180px;height:36px;padding-top:2px;line-height:34px"></div>
<div class="td num g" style="left:1156px;top:233px;width:180px;height:36px;padding-top:2px;line-height:34px">35,763.68</div>
<div class="td num g" style="left:1336px;top:233px;width:180px;height:36px;padding-top:2px;line-height:34px">35,763.68</div>
<div class="td num g" style="left:1516px;top:233px;width:180px;height:36px;padding-top:2px;line-height:34px"></div>
<div class="td num g" style="left:1696px;top:233px;width:180px;height:36px;padding-top:2px;line-height:34px"></div>
<div class="td lab" style="left:545px;top:269px;width:251px;height:29px;line-height:29px"><span class=lt>LR02_</span>二、营业总成本</div>
<div class="td num g" style="left:796px;top:269px;width:180px;height:29px;padding-top:2px;line-height:27px">8,367,812.56</div>
<div class="td num g" style="left:976px;top:269px;width:180px;height:29px;padding-top:2px;line-height:27px">462,811.46</div>
<div class="td num g" style="left:1156px;top:269px;width:180px;height:29px;padding-top:2px;line-height:27px">8,014,837.36</div>
<div class="td num g" style="left:1336px;top:269px;width:180px;height:29px;padding-top:2px;line-height:27px">8,367,812.56</div>
<div class="td num g" style="left:1516px;top:269px;width:180px;height:29px;padding-top:2px;line-height:27px">462,811.46</div>
<div class="td num g" style="left:1696px;top:269px;width:180px;height:29px;padding-top:2px;line-height:27px">8,014,837.36</div>
<div class="td lab" style="left:545px;top:298px;width:251px;height:27px;line-height:27px"><span class=lt>LR03_</span>其中：营业成本</div>
<div class="td num g" style="left:796px;top:298px;width:180px;height:27px;padding-top:2px;line-height:25px">0.17</div>
<div class="td num w" style="left:976px;top:298px;width:180px;height:27px;padding-top:2px;line-height:25px"></div>
<div class="td num g" style="left:1156px;top:298px;width:180px;height:27px;padding-top:2px;line-height:25px">0.17</div>
<div class="td num g" style="left:1336px;top:298px;width:180px;height:27px;padding-top:2px;line-height:25px">0.17</div>
<div class="td num g" style="left:1516px;top:298px;width:180px;height:27px;padding-top:2px;line-height:25px"></div>
<div class="td num g" style="left:1696px;top:298px;width:180px;height:27px;padding-top:2px;line-height:25px">0.17</div>
<div class="td lab" style="left:545px;top:325px;width:251px;height:30px;line-height:30px"><span class=lt>LR04_</span>税金及附加</div>
<div class="td num g" style="left:796px;top:325px;width:180px;height:30px;padding-top:2px;line-height:28px"></div>
<div class="td num w" style="left:976px;top:325px;width:180px;height:30px;padding-top:2px;line-height:28px"></div>
<div class="td num g" style="left:1156px;top:325px;width:180px;height:30px;padding-top:2px;line-height:28px"></div>
<div class="td num g" style="left:1336px;top:325px;width:180px;height:30px;padding-top:2px;line-height:28px"></div>
<div class="td num g" style="left:1516px;top:325px;width:180px;height:30px;padding-top:2px;line-height:28px"></div>
<div class="td num g" style="left:1696px;top:325px;width:180px;height:30px;padding-top:2px;line-height:28px"></div>
<div class="td lab" style="left:545px;top:355px;width:251px;height:29px;line-height:29px"><span class=lt>LR05_</span>销售费用</div>
<div class="td num g" style="left:796px;top:355px;width:180px;height:29px;padding-top:2px;line-height:27px"></div>
<div class="td num w" style="left:976px;top:355px;width:180px;height:29px;padding-top:2px;line-height:27px"></div>
<div class="td num g" style="left:1156px;top:355px;width:180px;height:29px;padding-top:2px;line-height:27px"></div>
<div class="td num g" style="left:1336px;top:355px;width:180px;height:29px;padding-top:2px;line-height:27px"></div>
<div class="td num g" style="left:1516px;top:355px;width:180px;height:29px;padding-top:2px;line-height:27px"></div>
<div class="td num g" style="left:1696px;top:355px;width:180px;height:29px;padding-top:2px;line-height:27px"></div>
<div class="td lab" style="left:545px;top:384px;width:251px;height:28px;line-height:28px"><span class=lt>LR06_</span>管理费用</div>
<div class="td num g" style="left:796px;top:384px;width:180px;height:28px;padding-top:2px;line-height:26px">5,266,837.62</div>
<div class="td num w" style="left:976px;top:384px;width:180px;height:28px;padding-top:2px;line-height:26px"></div>
<div class="td num g" style="left:1156px;top:384px;width:180px;height:28px;padding-top:2px;line-height:26px">5,266,837.62</div>
<div class="td num g" style="left:1336px;top:384px;width:180px;height:28px;padding-top:2px;line-height:26px">5,266,837.62</div>
<div class="td num g" style="left:1516px;top:384px;width:180px;height:28px;padding-top:2px;line-height:26px"></div>
<div class="td num g" style="left:1696px;top:384px;width:180px;height:28px;padding-top:2px;line-height:26px">5,266,837.62</div>
<div class="td lab" style="left:545px;top:412px;width:251px;height:28px;line-height:28px"><span class=lt>LR07_</span>研发费用</div>
<div class="td num b" style="left:796px;top:412px;width:180px;height:28px;padding-top:2px;line-height:26px">4,733,628.36</div>
<div class="td num b" style="left:976px;top:412px;width:180px;height:28px;padding-top:2px;line-height:26px"></div>
<div class="td num b" style="left:1156px;top:412px;width:180px;height:28px;padding-top:2px;line-height:26px">4,733,628.36</div>
<div class="td num b" style="left:1336px;top:412px;width:180px;height:28px;padding-top:2px;line-height:26px">4,733,628.36</div>
<div class="td num b" style="left:1516px;top:412px;width:180px;height:28px;padding-top:2px;line-height:26px"></div>
<div class="td num b" style="left:1696px;top:412px;width:180px;height:28px;padding-top:2px;line-height:26px">4,733,628.36</div>
<div class="td lab" style="left:545px;top:440px;width:251px;height:29px;line-height:29px"><span class=lt>LR08_</span>财务费用</div>
<div class="td num g" style="left:796px;top:440px;width:180px;height:29px;padding-top:2px;line-height:27px">-726,356.15</div>
<div class="td num w" style="left:976px;top:440px;width:180px;height:29px;padding-top:2px;line-height:27px">462,811.46</div>
<div class="td num g" style="left:1156px;top:440px;width:180px;height:29px;padding-top:2px;line-height:27px">-426,626.58</div>
<div class="td num g" style="left:1336px;top:440px;width:180px;height:29px;padding-top:2px;line-height:27px">-726,356.15</div>
<div class="td num g" style="left:1516px;top:440px;width:180px;height:29px;padding-top:2px;line-height:27px">462,811.46</div>
<div class="td num g" style="left:1696px;top:440px;width:180px;height:29px;padding-top:2px;line-height:27px">-426,626.58</div>
<div class="td lab" style="left:545px;top:469px;width:251px;height:30px;line-height:30px"><span class=lt>LR10_</span>加：其他收益</div>
<div class="td num g" style="left:796px;top:469px;width:180px;height:30px;padding-top:2px;line-height:28px"></div>
<div class="td num w" style="left:976px;top:469px;width:180px;height:30px;padding-top:2px;line-height:28px"></div>
<div class="td num g" style="left:1156px;top:469px;width:180px;height:30px;padding-top:2px;line-height:28px"></div>
<div class="td num g" style="left:1336px;top:469px;width:180px;height:30px;padding-top:2px;line-height:28px"></div>
<div class="td num g" style="left:1516px;top:469px;width:180px;height:30px;padding-top:2px;line-height:28px"></div>
<div class="td num g" style="left:1696px;top:469px;width:180px;height:30px;padding-top:2px;line-height:28px"></div>
<div class="td lab" style="left:545px;top:499px;width:251px;height:30px;line-height:30px"><span class=lt>LR11_</span>投资收益</div>
<div class="td num g" style="left:796px;top:499px;width:180px;height:30px;padding-top:2px;line-height:28px">3,467,166.85</div>
<div class="td num w" style="left:976px;top:499px;width:180px;height:30px;padding-top:2px;line-height:28px">0.00</div>
<div class="td num g" style="left:1156px;top:499px;width:180px;height:30px;padding-top:2px;line-height:28px">3,467,166.85</div>
<div class="td num g" style="left:1336px;top:499px;width:180px;height:30px;padding-top:2px;line-height:28px">3,467,166.85</div>
<div class="td num g" style="left:1516px;top:499px;width:180px;height:30px;padding-top:2px;line-height:28px">0.00</div>
<div class="td num g" style="left:1696px;top:499px;width:180px;height:30px;padding-top:2px;line-height:28px">3,467,166.85</div>
<div class="td lab2" style="left:545px;top:529px;width:251px;height:41px;line-height:20px"><span class=lt>LR19_</span>公允价值变动收益（损失以<br>&nbsp;<span class=q>“</span>-<span class=q>”</span>号填列）</div>
<div class="td num g" style="left:796px;top:529px;width:180px;height:41px;padding-top:2px;line-height:39px"></div>
<div class="td num w" style="left:976px;top:529px;width:180px;height:41px;padding-top:2px;line-height:39px"></div>
<div class="td num g" style="left:1156px;top:529px;width:180px;height:41px;padding-top:2px;line-height:39px"></div>
<div class="td num g" style="left:1336px;top:529px;width:180px;height:41px;padding-top:2px;line-height:39px"></div>
<div class="td num g" style="left:1516px;top:529px;width:180px;height:41px;padding-top:2px;line-height:39px"></div>
<div class="td num g" style="left:1696px;top:529px;width:180px;height:41px;padding-top:2px;line-height:39px"></div>
<div class="td lab2" style="left:545px;top:570px;width:251px;height:41px;line-height:20px"><span class=lt>LR20_</span>信用减值损失（损失以<span class=q>“</span>-<span class=q>”</span>号填<br>列）</div>
<div class="td num g" style="left:796px;top:570px;width:180px;height:41px;padding-top:2px;line-height:39px"></div>
<div class="td num w" style="left:976px;top:570px;width:180px;height:41px;padding-top:2px;line-height:39px"></div>
<div class="td num g" style="left:1156px;top:570px;width:180px;height:41px;padding-top:2px;line-height:39px"></div>
<div class="td num g" style="left:1336px;top:570px;width:180px;height:41px;padding-top:2px;line-height:39px"></div>
<div class="td num g" style="left:1516px;top:570px;width:180px;height:41px;padding-top:2px;line-height:39px"></div>
<div class="td num g" style="left:1696px;top:570px;width:180px;height:41px;padding-top:2px;line-height:39px"></div>
<div class="td lab2" style="left:545px;top:611px;width:251px;height:41px;line-height:20px"><span class=lt>LR09_</span>资产减值损失（损失以<span class=q>“</span>-<span class=q>”</span>号填<br>列）</div>
<div class="td num g" style="left:796px;top:611px;width:180px;height:41px;padding-top:2px;line-height:39px"></div>
<div class="td num w" style="left:976px;top:611px;width:180px;height:41px;padding-top:2px;line-height:39px"></div>
<div class="td num g" style="left:1156px;top:611px;width:180px;height:41px;padding-top:2px;line-height:39px"></div>
<div class="td num g" style="left:1336px;top:611px;width:180px;height:41px;padding-top:2px;line-height:39px"></div>
<div class="td num g" style="left:1516px;top:611px;width:180px;height:41px;padding-top:2px;line-height:39px"></div>
<div class="td num g" style="left:1696px;top:611px;width:180px;height:41px;padding-top:2px;line-height:39px"></div>
<div class="td lab" style="left:545px;top:652px;width:251px;height:30px;line-height:30px"><span class=lt>LR12_</span>资产处置收益</div>
<div class="td num g" style="left:796px;top:652px;width:180px;height:30px;padding-top:2px;line-height:28px">210.00</div>
<div class="td num w" style="left:976px;top:652px;width:180px;height:30px;padding-top:2px;line-height:28px"></div>
<div class="td num g" style="left:1156px;top:652px;width:180px;height:30px;padding-top:2px;line-height:28px">210.00</div>
<div class="td num g" style="left:1336px;top:652px;width:180px;height:30px;padding-top:2px;line-height:28px">210.00</div>
<div class="td num g" style="left:1516px;top:652px;width:180px;height:30px;padding-top:2px;line-height:28px"></div>
<div class="td num g" style="left:1696px;top:652px;width:180px;height:30px;padding-top:2px;line-height:28px">210.00</div>
<div class="td lab" style="left:545px;top:682px;width:251px;height:25px;line-height:25px"><span class=lt>LR13_</span>三、营业利润</div>
<div class="td num g" style="left:796px;top:682px;width:180px;height:25px;padding-top:2px;line-height:23px">-7,276,938.17</div>
<div class="td num g" style="left:976px;top:682px;width:180px;height:25px;padding-top:2px;line-height:23px">-462,811.46</div>
<div class="td num g" style="left:1156px;top:682px;width:180px;height:25px;padding-top:2px;line-height:23px">-7,877,145.37</div>
<div class="td num g" style="left:1336px;top:682px;width:180px;height:25px;padding-top:2px;line-height:23px">-7,276,938.17</div>
<div class="td num g" style="left:1516px;top:682px;width:180px;height:25px;padding-top:2px;line-height:23px">-462,811.46</div>
<div class="td num g" style="left:1696px;top:682px;width:180px;height:25px;padding-top:2px;line-height:23px">-7,877,145.37</div>
<div class="td lab" style="left:545px;top:707px;width:251px;height:28px;line-height:28px"><span class=lt>LR14_</span>加：营业外收入</div>
<div class="td num g" style="left:796px;top:707px;width:180px;height:28px;padding-top:2px;line-height:26px">21,760.00</div>
<div class="td num w" style="left:976px;top:707px;width:180px;height:28px;padding-top:2px;line-height:26px"></div>
<div class="td num g" style="left:1156px;top:707px;width:180px;height:28px;padding-top:2px;line-height:26px">21,760.00</div>
<div class="td num g" style="left:1336px;top:707px;width:180px;height:28px;padding-top:2px;line-height:26px">21,760.00</div>
<div class="td num g" style="left:1516px;top:707px;width:180px;height:28px;padding-top:2px;line-height:26px"></div>
<div class="td num g" style="left:1696px;top:707px;width:180px;height:28px;padding-top:2px;line-height:26px">21,760.00</div>
<div class="td lab" style="left:545px;top:735px;width:251px;height:28px;line-height:28px"><span class=lt>LR15_</span>减：营业外支出</div>
<div class="td num g" style="left:796px;top:735px;width:180px;height:28px;padding-top:2px;line-height:26px"></div>
<div class="td num w" style="left:976px;top:735px;width:180px;height:28px;padding-top:2px;line-height:26px"></div>
<div class="td num g" style="left:1156px;top:735px;width:180px;height:28px;padding-top:2px;line-height:26px"></div>
<div class="td num g" style="left:1336px;top:735px;width:180px;height:28px;padding-top:2px;line-height:26px"></div>
<div class="td num g" style="left:1516px;top:735px;width:180px;height:28px;padding-top:2px;line-height:26px"></div>
<div class="td num g" style="left:1696px;top:735px;width:180px;height:28px;padding-top:2px;line-height:26px"></div>
<div class="td lab" style="left:545px;top:763px;width:251px;height:27px;line-height:27px"><span class=lt>LR16_</span>四、利润总额</div>
<div class="td num g" style="left:796px;top:763px;width:180px;height:27px;padding-top:2px;line-height:25px">-5,287,637.16</div>
<div class="td num g" style="left:976px;top:763px;width:180px;height:27px;padding-top:2px;line-height:25px">-462,811.46</div>
<div class="td num g" style="left:1156px;top:763px;width:180px;height:27px;padding-top:2px;line-height:25px">-5,826,355.46</div>
<div class="td num g" style="left:1336px;top:763px;width:180px;height:27px;padding-top:2px;line-height:25px">-5,287,637.16</div>
<div class="td num g" style="left:1516px;top:763px;width:180px;height:27px;padding-top:2px;line-height:25px">-462,811.46</div>
<div class="td num g" style="left:1696px;top:763px;width:180px;height:27px;padding-top:2px;line-height:25px">-5,826,355.46</div>
<div class="td lab" style="left:545px;top:790px;width:251px;height:25px;line-height:25px"><span class=lt>LR17_</span>减：所得税费用</div>
<div class="td num g" style="left:796px;top:790px;width:180px;height:25px;padding-top:2px;line-height:23px"></div>
<div class="td num w" style="left:976px;top:790px;width:180px;height:25px;padding-top:2px;line-height:23px">-1,346,566.28</div>
<div class="td num g" style="left:1156px;top:790px;width:180px;height:25px;padding-top:2px;line-height:23px">-1,346,566.28</div>
<div class="td num g" style="left:1336px;top:790px;width:180px;height:25px;padding-top:2px;line-height:23px"></div>
<div class="td num g" style="left:1516px;top:790px;width:180px;height:25px;padding-top:2px;line-height:23px">-1,346,566.28</div>
<div class="td num g" style="left:1696px;top:790px;width:180px;height:25px;padding-top:2px;line-height:23px">-1,346,566.28</div>
<div class="td lab" style="left:545px;top:815px;width:251px;height:26px;line-height:26px"><span class=lt>LR18_</span>五、净利润</div>
<div class="td num g" style="left:796px;top:815px;width:180px;height:26px;padding-top:2px;line-height:24px">-5,287,637.16</div>
<div class="td num g" style="left:976px;top:815px;width:180px;height:26px;padding-top:2px;line-height:24px">628,466.28</div>
<div class="td num g" style="left:1156px;top:815px;width:180px;height:26px;padding-top:2px;line-height:24px">-4,256,578.74</div>
<div class="td num g" style="left:1336px;top:815px;width:180px;height:26px;padding-top:2px;line-height:24px">-5,287,637.16</div>
<div class="td num g" style="left:1516px;top:815px;width:180px;height:26px;padding-top:2px;line-height:24px">628,466.28</div>
<div class="td num g" style="left:1696px;top:815px;width:180px;height:26px;padding-top:2px;line-height:24px">-4,256,578.74</div>
<div class="td lab" style="left:545px;top:841px;width:251px;height:26px;line-height:26px"><span class=lt>LR21_</span>六、归属于母公司的净利润</div>
<div class="td num g" style="left:796px;top:841px;width:180px;height:26px;padding-top:2px;line-height:24px"></div>
<div class="td num g" style="left:976px;top:841px;width:180px;height:26px;padding-top:2px;line-height:24px">628,466.28</div>
<div class="td num g" style="left:1156px;top:841px;width:180px;height:26px;padding-top:2px;line-height:24px">628,466.28</div>
<div class="td num g" style="left:1336px;top:841px;width:180px;height:26px;padding-top:2px;line-height:24px">-5,287,637.16</div>
<div class="td num g" style="left:1516px;top:841px;width:180px;height:26px;padding-top:2px;line-height:24px">628,466.28</div>
<div class="td num g" style="left:1696px;top:841px;width:180px;height:26px;padding-top:2px;line-height:24px">-4,256,578.74</div>
<div class="td lab" style="left:545px;top:867px;width:251px;height:30px;line-height:30px"><span class=lt>GJZB17_</span>期间费用</div>
<div class="td num g" style="left:796px;top:867px;width:180px;height:30px;padding-top:2px;line-height:28px">8,367,812.13</div>
<div class="td num w" style="left:976px;top:867px;width:180px;height:30px;padding-top:2px;line-height:28px">462,811.46</div>
<div class="td num g" style="left:1156px;top:867px;width:180px;height:30px;padding-top:2px;line-height:28px">9,153,256.36</div>
<div class="td num g" style="left:1336px;top:867px;width:180px;height:30px;padding-top:2px;line-height:28px">8,367,812.13</div>
<div class="td num g" style="left:1516px;top:867px;width:180px;height:30px;padding-top:2px;line-height:28px">462,811.46</div>
<div class="td num g" style="left:1696px;top:867px;width:180px;height:30px;padding-top:2px;line-height:28px">9,153,256.36</div>
<div class="abs" style="left:545px;top:897px;width:1332px;height:1px;background:#d4d4d4"></div>
<div class="abs" style="left:1876px;top:213px;width:1px;height:685px;background:#d4d4d4"></div>
</body></html>
